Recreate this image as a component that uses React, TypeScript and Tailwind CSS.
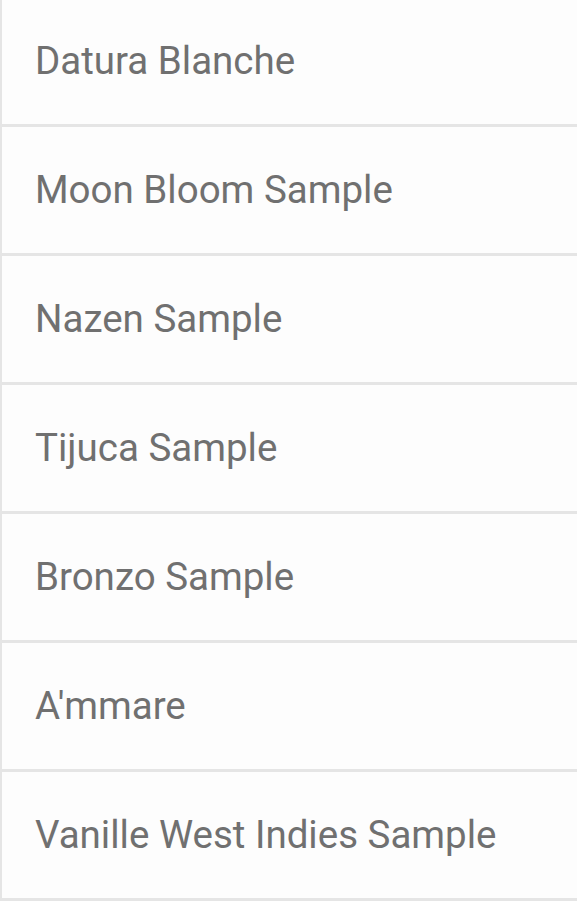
import React from "react";

const items = [
  "Datura Blanche",
  "Moon Bloom Sample",
  "Nazen Sample",
  "Tijuca Sample",
  "Bronzo Sample",
  "A'mmare",
  "Vanille West Indies Sample",
];

export default function App() {
  return (
    <div className="w-[577px] h-[901px] overflow-hidden bg-[#e5e5e5]" style={{ fontFamily: "Roboto, 'Liberation Sans', sans-serif" }}>
      <div className="flex flex-col gap-[3px] -mt-[2px]">
        {items.map((t) => (
          <div key={t} className="h-[126px] bg-[#fdfdfd] border-l-2 border-[#e5e5e5] flex items-center pl-[33px]">
            <span className="text-[38.5px] text-[#707070] leading-none">{t}</span>
          </div>
        ))}
      </div>
    </div>
  );
}
